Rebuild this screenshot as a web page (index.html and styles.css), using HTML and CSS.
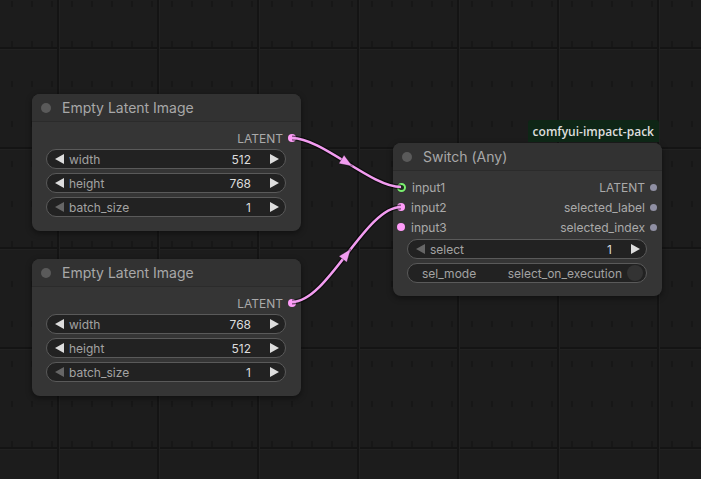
FILE: index.html
```html
<!DOCTYPE html>
<html lang="en">
<head>
    <meta charset="UTF-8">
    <title>Switch (Any)</title>
    <link rel="stylesheet" href="styles.css">
</head>
<body>
    <div class="graph">
        <!-- links between nodes -->
        <svg class="links" width="701" height="479" viewBox="0 0 701 479">
            <g class="link">
                <path class="link-shadow" d="M292,138 C322,138 371,187 401,187"/>
                <path class="link-line" d="M292,138 C322,138 371,187 401,187"/>
                <polygon class="link-arrow" points="-6,-5 7,0 -6,5" transform="translate(346.5 162.5) rotate(31.8)"/>
            </g>
            <g class="link">
                <path class="link-shadow" d="M292,302 C328,302 365,207 401,207"/>
                <path class="link-line" d="M292,302 C328,302 365,207 401,207"/>
                <polygon class="link-arrow" points="-6,-5 7,0 -6,5" transform="translate(346.5 254.5) rotate(-52.5)"/>
            </g>
        </svg>

        <!-- Empty Latent Image #1 -->
        <div class="node latent-a">
            <div class="node-title"><span class="title-dot"></span>Empty Latent Image</div>
            <div class="node-body">
                <div class="slots">
                    <div class="slot-row">
                        <span></span>
                        <span class="slot out">LATENT<i class="dot dot-latent"></i></span>
                    </div>
                </div>
                <div class="widgets">
                    <div class="widget"><i class="arr-l"></i><span class="w-label">width</span><span class="w-value">512</span><i class="arr-r"></i></div>
                    <div class="widget"><i class="arr-l"></i><span class="w-label">height</span><span class="w-value">768</span><i class="arr-r"></i></div>
                    <div class="widget"><i class="arr-l dim"></i><span class="w-label">batch_size</span><span class="w-value">1</span><i class="arr-r"></i></div>
                </div>
            </div>
        </div>

        <!-- Empty Latent Image #2 -->
        <div class="node latent-b">
            <div class="node-title"><span class="title-dot"></span>Empty Latent Image</div>
            <div class="node-body">
                <div class="slots">
                    <div class="slot-row">
                        <span></span>
                        <span class="slot out">LATENT<i class="dot dot-latent"></i></span>
                    </div>
                </div>
                <div class="widgets">
                    <div class="widget"><i class="arr-l"></i><span class="w-label">width</span><span class="w-value">768</span><i class="arr-r"></i></div>
                    <div class="widget"><i class="arr-l"></i><span class="w-label">height</span><span class="w-value">512</span><i class="arr-r"></i></div>
                    <div class="widget"><i class="arr-l dim"></i><span class="w-label">batch_size</span><span class="w-value">1</span><i class="arr-r"></i></div>
                </div>
            </div>
        </div>

        <!-- Switch (Any) -->
        <div class="node switch">
            <div class="badge">comfyui-impact-pack</div>
            <div class="node-title"><span class="title-dot"></span>Switch (Any)</div>
            <div class="node-body">
                <div class="slots">
                    <div class="slot-row">
                        <span class="slot in"><i class="dot dot-active"></i>input1</span>
                        <span class="slot out">LATENT<i class="dot dot-any"></i></span>
                    </div>
                    <div class="slot-row">
                        <span class="slot in"><i class="dot dot-latent"></i>input2</span>
                        <span class="slot out">selected_label<i class="dot dot-any"></i></span>
                    </div>
                    <div class="slot-row">
                        <span class="slot in"><i class="dot dot-latent"></i>input3</span>
                        <span class="slot out">selected_index<i class="dot dot-any"></i></span>
                    </div>
                </div>
                <div class="widgets">
                    <div class="widget"><i class="arr-l dim"></i><span class="w-label">select</span><span class="w-value">1</span><i class="arr-r"></i></div>
                    <div class="widget toggle"><span class="w-label">sel_mode</span><span class="w-text">select_on_execution</span><i class="knob"></i></div>
                </div>
            </div>
        </div>
    </div>
</body>
</html>
```

FILE: styles.css
```css
/* --- General --- */
* {
    margin: 0;
    padding: 0;
    box-sizing: border-box;
}

body {
    background: #1b1b1b;
    font-family: Inter, 'Liberation Sans', Arial, sans-serif;
}

/* --- Canvas with grid --- */
.graph {
    position: relative;
    width: 701px;
    height: 479px;
    overflow: hidden;
    background-color: #1c1c1c;
    background-image:
        linear-gradient(90deg, transparent 57px, #141414 57px, #141414 59px, #212121 59px, #212121 60px, transparent 60px),
        linear-gradient(180deg, transparent 47px, #141414 47px, #141414 49px, #212121 49px, #212121 50px, transparent 50px),
        linear-gradient(180deg, transparent 6px, #1c1c1c 6px),
        linear-gradient(90deg, transparent 11px, #171717 11px, #171717 13px, transparent 13px);
    background-size: 100px 100px, 100px 100px, 20px 40px, 20px 40px;
    background-position: 0 0, 0 0, 0 1px, 0 1px;
}

.links {
    position: absolute;
    left: 0;
    top: 0;
    z-index: 2;
}

.link-shadow {
    fill: none;
    stroke: rgba(0, 0, 0, 0.55);
    stroke-width: 5;
}

.link-line {
    fill: none;
    stroke: #f29cf0;
    stroke-width: 2.6;
}

.link-arrow {
    fill: #f29cf0;
    stroke: rgba(0, 0, 0, 0.4);
    stroke-width: 0.8;
}

/* --- Nodes --- */
.node {
    position: absolute;
    width: 269px;
    background: #353535;
    border-radius: 8px;
    box-shadow: 0 2px 6px rgba(0, 0, 0, 0.45);
    z-index: 1;
}

.latent-a { left: 32px; top: 94px; }
.latent-b { left: 32px; top: 259px; }
.switch { left: 393px; top: 143px; }

.node-title {
    height: 28px;
    display: flex;
    align-items: center;
    gap: 11px;
    padding-left: 9px;
    background: #323232;
    border-radius: 8px 8px 0 0;
    border-bottom: 1px solid #2b2b2b;
    color: #a8a8a8;
    font-size: 14px;
}

.title-dot {
    width: 10px;
    height: 10px;
    border-radius: 50%;
    background: #5a5a5a;
}

.node-body {
    padding: 6px 0 14px;
}

.switch .node-body {
    padding-bottom: 13px;
}

/* --- Slots --- */
.slot-row {
    height: 20px;
    display: flex;
    justify-content: space-between;
    align-items: center;
    font-size: 12px;
    color: #aaa;
}

.slot {
    display: flex;
    align-items: center;
}

.slot.in {
    gap: 6px;
    padding-left: 4px;
}

.slot.out {
    gap: 5px;
    padding-right: 5px;
}

.dot {
    width: 8px;
    height: 8px;
    border-radius: 50%;
}

.dot-latent { background: #ff9cf9; }
.dot-any { background: #8f8fa3; width: 7px; height: 7px; }
.dot-active {
    width: 9px;
    height: 9px;
    background: #1e2a1e;
    border: 2px solid #7af06f;
}

/* --- Widgets --- */
.widgets {
    display: flex;
    flex-direction: column;
    gap: 4px;
    padding: 1px 15px 0 14px;
}

.switch .widgets {
    padding-top: 2px;
}

.widget {
    height: 20px;
    display: flex;
    align-items: center;
    padding: 0 6px 0 8px;
    background: #222;
    border: 1px solid #5a5a5a;
    border-radius: 10px;
    font-size: 12px;
}

.w-label {
    color: #a3a3a3;
    margin-left: 5px;
    flex: 1;
}

.w-value {
    color: #ddd;
    margin-right: 19px;
}

.arr-l, .arr-r {
    width: 0;
    height: 0;
    border-top: 5px solid transparent;
    border-bottom: 5px solid transparent;
}

.arr-l { border-right: 9px solid #ddd; }
.arr-l.dim { border-right-color: #666; }
.arr-r { border-left: 9px solid #ddd; }

.widget.toggle {
    padding: 0 3px 0 14px;
}

.toggle .w-label { margin-left: 0; }

.w-text {
    color: #a3a3a3;
    margin-right: 5px;
}

.knob {
    width: 16px;
    height: 16px;
    border-radius: 50%;
    background: #333;
}

/* --- Badge --- */
.badge {
    position: absolute;
    right: 3px;
    top: -23px;
    height: 22px;
    padding: 0 5px;
    display: flex;
    align-items: center;
    background: #0e2616;
    color: #dedede;
    font-family: 'Open Sans', 'Noto Sans', sans-serif;
    font-size: 12px;
    font-weight: 600;
    border-radius: 3px 3px 0 0;
}
```
